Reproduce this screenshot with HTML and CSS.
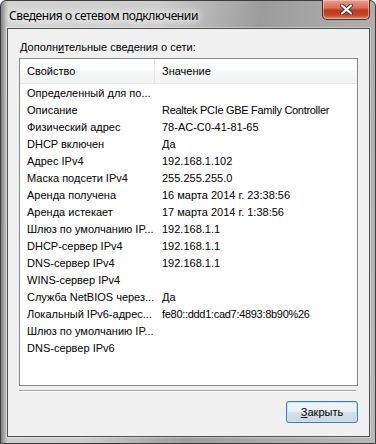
FILE: index.html
```html
<!DOCTYPE html>
<html lang="ru">
<head>
<meta charset="utf-8">
<title>Сведения о сетевом подключении</title>
<link rel="stylesheet" href="styles.css">
</head>
<body>
<div class="window">
  <div class="titlebar">
    <span class="title">Сведения о сетевом подключении</span>
    <button class="close" aria-label="Закрыть">
      <svg width="13" height="11" viewBox="0 0 13 11"><path d="M2 1.5 L11 9.5 M11 1.5 L2 9.5" stroke="#3a3a3a" stroke-width="4" stroke-linecap="round"/><path d="M2 1.5 L11 9.5 M11 1.5 L2 9.5" stroke="#fff" stroke-width="2.2" stroke-linecap="round"/></svg>
    </button>
  </div>
  <div class="client">
    <div class="label">Дополн<u>и</u>тельные сведения о сети:</div>
    <div class="listbox">
      <div class="header">
        <div class="hcell col1">Свойство</div>
        <div class="hcell col2">Значение</div>
      </div>
      <div class="rows">
        <div class="row"><span class="col1">Определенный для по...</span><span class="col2"></span></div>
        <div class="row"><span class="col1">Описание</span><span class="col2 latin">Realtek PCIe GBE Family Controller</span></div>
        <div class="row"><span class="col1">Физический адрес</span><span class="col2">78-AC-C0-41-81-65</span></div>
        <div class="row"><span class="col1">DHCP включен</span><span class="col2">Да</span></div>
        <div class="row"><span class="col1">Адрес IPv4</span><span class="col2">192.168.1.102</span></div>
        <div class="row"><span class="col1">Маска подсети IPv4</span><span class="col2">255.255.255.0</span></div>
        <div class="row"><span class="col1">Аренда получена</span><span class="col2">16 марта 2014 г. 23:38:56</span></div>
        <div class="row"><span class="col1">Аренда истекает</span><span class="col2">17 марта 2014 г. 1:38:56</span></div>
        <div class="row"><span class="col1">Шлюз по умолчанию IP...</span><span class="col2">192.168.1.1</span></div>
        <div class="row"><span class="col1">DHCP-сервер IPv4</span><span class="col2">192.168.1.1</span></div>
        <div class="row"><span class="col1">DNS-сервер IPv4</span><span class="col2">192.168.1.1</span></div>
        <div class="row"><span class="col1">WINS-сервер IPv4</span><span class="col2"></span></div>
        <div class="row"><span class="col1">Служба NetBIOS через...</span><span class="col2">Да</span></div>
        <div class="row"><span class="col1">Локальный IPv6-адрес...</span><span class="col2 latin">fe80::ddd1:cad7:4893:8b90%26</span></div>
        <div class="row"><span class="col1">Шлюз по умолчанию IP...</span><span class="col2"></span></div>
        <div class="row"><span class="col1">DNS-сервер IPv6</span><span class="col2"></span></div>
      </div>
    </div>
    <div class="separator"></div>
    <div class="buttons">
      <button class="btn"><u>З</u>акрыть</button>
    </div>
  </div>
</div>
</body>
</html>
```
FILE: styles.css
```css
* { box-sizing: border-box; }
html, body { margin: 0; padding: 0; }
body {
  width: 376px;
  height: 444px;
  background: #fff;
  font-family: "Liberation Sans", Arial, sans-serif;
  font-size: 11px;
  color: #000;
}
.window {
  width: 376px;
  height: 444px;
  border: 1px solid #3c3c3c;
  border-radius: 6px 6px 0 0;
  padding: 0 5px 6px 6px;
  display: flex;
  flex-direction: column;
  background:
    linear-gradient(90deg, rgba(60,60,60,0.55) 0, rgba(120,120,120,0.2) 5px, rgba(0,0,0,0) 7px),
    linear-gradient(100deg, #d3d3d3 0, #cdcdcd 35%, #9c9c9c 58%, #a9a9a9 75%, #b9b9b9 100%);
}
.titlebar {
  height: 27px;
  display: flex;
  align-items: flex-start;
  flex-shrink: 0;
}
.title {
  font-family: "Noto Sans", "Open Sans", sans-serif;
  font-size: 12px;
  line-height: 16px;
  margin: 7px 0 0 2px;
  color: #000;
  text-shadow: 0 0 6px #fff, 0 0 10px #fff, 0 0 14px rgba(255,255,255,0.8);
  letter-spacing: -0.4px;
}
.close {
  margin: -1px 0 0 auto;
  width: 48px;
  height: 20px;
  padding: 0;
  border: 1px solid #5a2a20;
  border-top: none;
  border-radius: 0 0 5px 5px;
  background: linear-gradient(180deg, #e3a08e 0, #d7735a 40%, #c1371a 55%, #c8452a 80%, #de8a6f 100%);
  box-shadow: inset 0 0 0 1px rgba(255,220,200,0.55);
  display: flex;
  align-items: center;
  justify-content: center;
}
.client {
  flex: 1;
  background: #f0f0f0;
  border: 1px solid #505050;
  padding: 12px 11px 0 11px;
  display: flex;
  flex-direction: column;
  box-shadow: 0 0 0 1px rgba(255,255,255,0.35);
}
.label {
  line-height: 13px;
  height: 13px;
  padding-left: 1px;
  margin-bottom: 4px;
}
.label u, .btn u { text-decoration-thickness: 1px; text-underline-offset: 1px; }
.listbox {
  height: 328px;
  border: 1px solid #828790;
  background: #fff;
  display: flex;
  flex-direction: column;
}
.header {
  height: 25px;
  display: flex;
  border-bottom: 1px solid #e5e5e5;
  background: linear-gradient(180deg, #ffffff 0, #ffffff 45%, #f6f7f8 55%, #f1f2f4 100%);
  flex-shrink: 0;
}
.hcell {
  line-height: 24px;
}
.hcell.col1 {
  width: 135px;
  padding-left: 7px;
  border-right: 1px solid #e5e5e5;
}
.hcell.col2 {
  padding-left: 7px;
}
.rows {
  padding-top: 1px;
}
.row {
  height: 17px;
  line-height: 17px;
  display: flex;
  white-space: nowrap;
}
.row .col1 {
  width: 135px;
  padding-left: 7px;
  flex-shrink: 0;
  overflow: hidden;
}
.row .col2 {
  padding-left: 7px;
}
.row .col2.latin {
  letter-spacing: -0.3px;
}
.separator {
  margin-top: 4px;
  margin-right: 2px;
  height: 2px;
  border-top: 1px solid #a0a0a0;
  border-bottom: 1px solid #ffffff;
}
.buttons {
  display: flex;
  justify-content: flex-end;
  margin-top: 9px;
}
.btn {
  width: 72px;
  height: 22px;
  font-family: "Liberation Sans", Arial, sans-serif;
  font-size: 11px;
  color: #000;
  padding: 0;
  border: 1px solid #3c7fb1;
  border-radius: 3px;
  background: linear-gradient(180deg, #f2f6f9 0, #e8eef3 48%, #d6e0e8 52%, #cbd7e1 100%);
  box-shadow: inset 0 0 0 1px #bfe7fa;
}
```
